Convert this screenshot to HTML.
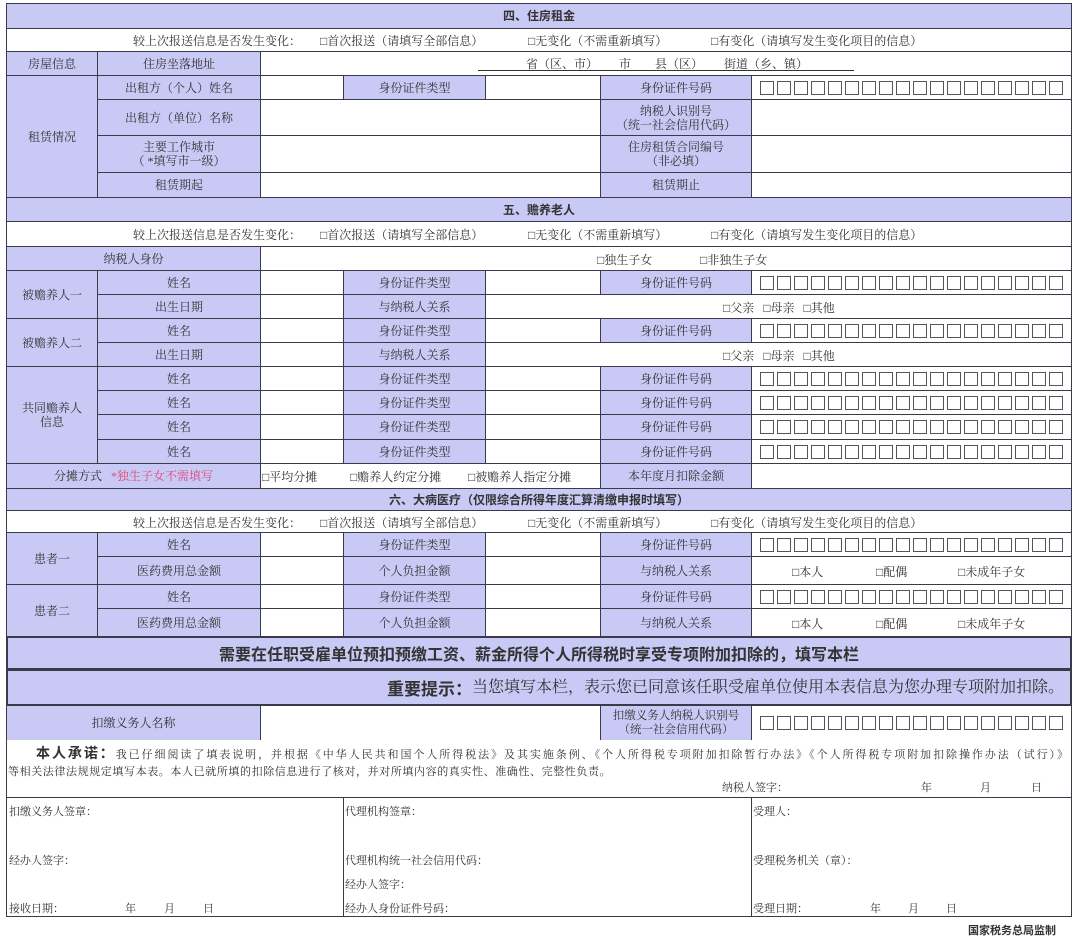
<!DOCTYPE html>
<html><head><meta charset="utf-8">
<style>
body{margin:0;width:1080px;height:940px;background:#fff;position:relative;overflow:hidden;font-family:"Liberation Serif","Noto Serif CJK SC","Noto Sans CJK SC",serif;color:#333;font-size:12px}
.c{position:absolute;box-sizing:border-box;border:1px solid #3a3a4a;display:flex;align-items:center;justify-content:center;text-align:center;line-height:14px;background:#fff}
.b{background:#c9c9f5}
.h{font-weight:bold;font-family:"Noto Sans CJK SC",sans-serif;font-size:12px}
.t{position:absolute;white-space:nowrap;font-size:12px}
.bx{display:flex;gap:3px;justify-content:center}
.bx i{display:block;width:14px;height:14px;box-sizing:border-box;border:1.5px solid #555}
</style></head><body>
<!-- Section 4 -->
<div class="c b h" style="left:6px;top:3px;width:1066px;height:26px">四、住房租金</div>
<div class="c" style="left:6px;top:28px;width:1066px;height:24px"></div>
<span class="t" style="left:133px;top:32px">较上次报送信息是否发生变化：</span>
<span class="t" style="left:320px;top:32px">□首次报送（请填写全部信息）</span>
<span class="t" style="left:528px;top:32px">□无变化（不需重新填写）</span>
<span class="t" style="left:711px;top:32px">□有变化（请填写发生变化项目的信息）</span>
<div class="c b" style="left:6px;top:51px;width:92px;height:25px">房屋信息</div>
<div class="c b" style="left:97px;top:51px;width:164px;height:25px">住房坐落地址</div>
<div class="c" style="left:260px;top:51px;width:812px;height:25px"></div>
<span class="t" style="left:478px;top:55px;width:376px;border-bottom:1px solid #333;height:15px">&nbsp;&nbsp;&nbsp;&nbsp;&nbsp;&nbsp;&nbsp;&nbsp;&nbsp;&nbsp;&nbsp;&nbsp;&nbsp;&nbsp;&nbsp;&nbsp;省（区、市）&nbsp;&nbsp;&nbsp;&nbsp;&nbsp;&nbsp;&nbsp;市&nbsp;&nbsp;&nbsp;&nbsp;&nbsp;&nbsp;&nbsp;&nbsp;县（区）&nbsp;&nbsp;&nbsp;&nbsp;&nbsp;&nbsp;&nbsp;街道（乡、镇）</span>
<div class="c b" style="left:6px;top:75px;width:92px;height:123px">租赁情况</div>
<div class="c b" style="left:97px;top:75px;width:164px;height:25px">出租方（个人）姓名</div>
<div class="c" style="left:260px;top:75px;width:84px;height:25px"></div>
<div class="c b" style="left:343px;top:75px;width:143px;height:25px">身份证件类型</div>
<div class="c" style="left:485px;top:75px;width:116px;height:25px"></div>
<div class="c b" style="left:600px;top:75px;width:152px;height:25px">身份证件号码</div>
<div class="c bx" style="left:751px;top:75px;width:321px;height:25px"><i></i><i></i><i></i><i></i><i></i><i></i><i></i><i></i><i></i><i></i><i></i><i></i><i></i><i></i><i></i><i></i><i></i><i></i></div>
<div class="c b" style="left:97px;top:99px;width:164px;height:37px">出租方（单位）名称</div>
<div class="c" style="left:260px;top:99px;width:341px;height:37px"></div>
<div class="c b" style="left:600px;top:99px;width:152px;height:37px">纳税人识别号<br>（统一社会信用代码）</div>
<div class="c" style="left:751px;top:99px;width:321px;height:37px"></div>
<div class="c b" style="left:97px;top:135px;width:164px;height:38px">主要工作城市<br>（ *填写市一级）</div>
<div class="c" style="left:260px;top:135px;width:341px;height:38px"></div>
<div class="c b" style="left:600px;top:135px;width:152px;height:38px">住房租赁合同编号<br>（非必填）</div>
<div class="c" style="left:751px;top:135px;width:321px;height:38px"></div>
<div class="c b" style="left:97px;top:172px;width:164px;height:26px">租赁期起</div>
<div class="c" style="left:260px;top:172px;width:341px;height:26px"></div>
<div class="c b" style="left:600px;top:172px;width:152px;height:26px">租赁期止</div>
<div class="c" style="left:751px;top:172px;width:321px;height:26px"></div>
<!-- Section 5 -->
<div class="c b h" style="left:6px;top:197px;width:1066px;height:25px">五、赡养老人</div>
<div class="c" style="left:6px;top:221px;width:1066px;height:26px"></div>
<span class="t" style="left:133px;top:226px">较上次报送信息是否发生变化：</span>
<span class="t" style="left:320px;top:226px">□首次报送（请填写全部信息）</span>
<span class="t" style="left:528px;top:226px">□无变化（不需重新填写）</span>
<span class="t" style="left:711px;top:226px">□有变化（请填写发生变化项目的信息）</span>
<div class="c b" style="left:6px;top:246px;width:255px;height:25px">纳税人身份</div>
<div class="c" style="left:260px;top:246px;width:812px;height:25px"></div>
<span class="t" style="left:597px;top:251px">□独生子女</span>
<span class="t" style="left:700px;top:251px">□非独生子女</span>

<div class="c b" style="left:6px;top:270px;width:92px;height:49px">被赡养人一</div>
<div class="c b" style="left:97px;top:270px;width:164px;height:25px">姓名</div>
<div class="c" style="left:260px;top:270px;width:84px;height:25px"></div>
<div class="c b" style="left:343px;top:270px;width:143px;height:25px">身份证件类型</div>
<div class="c" style="left:485px;top:270px;width:116px;height:25px"></div>
<div class="c b" style="left:600px;top:270px;width:152px;height:25px">身份证件号码</div>
<div class="c bx" style="left:751px;top:270px;width:321px;height:25px"><i></i><i></i><i></i><i></i><i></i><i></i><i></i><i></i><i></i><i></i><i></i><i></i><i></i><i></i><i></i><i></i><i></i><i></i></div>
<div class="c b" style="left:97px;top:294px;width:164px;height:25px">出生日期</div>
<div class="c" style="left:260px;top:294px;width:84px;height:25px"></div>
<div class="c b" style="left:343px;top:294px;width:143px;height:25px">与纳税人关系</div>
<div class="c" style="left:485px;top:294px;width:587px;height:25px"></div>
<span class="t" style="left:723px;top:299px">□父亲&nbsp;&nbsp;&nbsp;□母亲&nbsp;&nbsp;&nbsp;□其他</span>

<div class="c b" style="left:6px;top:318px;width:92px;height:49px">被赡养人二</div>
<div class="c b" style="left:97px;top:318px;width:164px;height:25px">姓名</div>
<div class="c" style="left:260px;top:318px;width:84px;height:25px"></div>
<div class="c b" style="left:343px;top:318px;width:143px;height:25px">身份证件类型</div>
<div class="c" style="left:485px;top:318px;width:116px;height:25px"></div>
<div class="c b" style="left:600px;top:318px;width:152px;height:25px">身份证件号码</div>
<div class="c bx" style="left:751px;top:318px;width:321px;height:25px"><i></i><i></i><i></i><i></i><i></i><i></i><i></i><i></i><i></i><i></i><i></i><i></i><i></i><i></i><i></i><i></i><i></i><i></i></div>
<div class="c b" style="left:97px;top:342px;width:164px;height:25px">出生日期</div>
<div class="c" style="left:260px;top:342px;width:84px;height:25px"></div>
<div class="c b" style="left:343px;top:342px;width:143px;height:25px">与纳税人关系</div>
<div class="c" style="left:485px;top:342px;width:587px;height:25px"></div>
<span class="t" style="left:723px;top:347px">□父亲&nbsp;&nbsp;&nbsp;□母亲&nbsp;&nbsp;&nbsp;□其他</span>

<div class="c b" style="left:6px;top:366px;width:92px;height:98px">共同赡养人<br>信息</div>
<div class="c b" style="left:97px;top:366px;width:164px;height:25px">姓名</div>
<div class="c" style="left:260px;top:366px;width:84px;height:25px"></div>
<div class="c b" style="left:343px;top:366px;width:143px;height:25px">身份证件类型</div>
<div class="c" style="left:485px;top:366px;width:116px;height:25px"></div>
<div class="c b" style="left:600px;top:366px;width:152px;height:25px">身份证件号码</div>
<div class="c bx" style="left:751px;top:366px;width:321px;height:25px"><i></i><i></i><i></i><i></i><i></i><i></i><i></i><i></i><i></i><i></i><i></i><i></i><i></i><i></i><i></i><i></i><i></i><i></i></div>
<div class="c b" style="left:97px;top:390px;width:164px;height:25px">姓名</div>
<div class="c" style="left:260px;top:390px;width:84px;height:25px"></div>
<div class="c b" style="left:343px;top:390px;width:143px;height:25px">身份证件类型</div>
<div class="c" style="left:485px;top:390px;width:116px;height:25px"></div>
<div class="c b" style="left:600px;top:390px;width:152px;height:25px">身份证件号码</div>
<div class="c bx" style="left:751px;top:390px;width:321px;height:25px"><i></i><i></i><i></i><i></i><i></i><i></i><i></i><i></i><i></i><i></i><i></i><i></i><i></i><i></i><i></i><i></i><i></i><i></i></div>
<div class="c b" style="left:97px;top:414px;width:164px;height:26px">姓名</div>
<div class="c" style="left:260px;top:414px;width:84px;height:26px"></div>
<div class="c b" style="left:343px;top:414px;width:143px;height:26px">身份证件类型</div>
<div class="c" style="left:485px;top:414px;width:116px;height:26px"></div>
<div class="c b" style="left:600px;top:414px;width:152px;height:26px">身份证件号码</div>
<div class="c bx" style="left:751px;top:414px;width:321px;height:26px"><i></i><i></i><i></i><i></i><i></i><i></i><i></i><i></i><i></i><i></i><i></i><i></i><i></i><i></i><i></i><i></i><i></i><i></i></div>
<div class="c b" style="left:97px;top:439px;width:164px;height:25px">姓名</div>
<div class="c" style="left:260px;top:439px;width:84px;height:25px"></div>
<div class="c b" style="left:343px;top:439px;width:143px;height:25px">身份证件类型</div>
<div class="c" style="left:485px;top:439px;width:116px;height:25px"></div>
<div class="c b" style="left:600px;top:439px;width:152px;height:25px">身份证件号码</div>
<div class="c bx" style="left:751px;top:439px;width:321px;height:25px"><i></i><i></i><i></i><i></i><i></i><i></i><i></i><i></i><i></i><i></i><i></i><i></i><i></i><i></i><i></i><i></i><i></i><i></i></div>

<div class="c b" style="left:6px;top:463px;width:255px;height:26px">分摊方式&nbsp;&nbsp;&nbsp;<span style="color:#e0457a">*独生子女不需填写</span></div>
<div class="c" style="left:260px;top:463px;width:341px;height:26px"></div>
<span class="t" style="left:262px;top:468px">□平均分摊</span>
<span class="t" style="left:350px;top:468px">□赡养人约定分摊</span>
<span class="t" style="left:468px;top:468px">□被赡养人指定分摊</span>
<div class="c b" style="left:600px;top:463px;width:152px;height:26px">本年度月扣除金额</div>
<div class="c" style="left:751px;top:463px;width:321px;height:26px"></div>
<!-- Section 6 -->
<div class="c b h" style="left:6px;top:488px;width:1066px;height:23px">六、大病医疗（仅限综合所得年度汇算清缴申报时填写）</div>
<div class="c" style="left:6px;top:510px;width:1066px;height:23px"></div>
<span class="t" style="left:133px;top:514px">较上次报送信息是否发生变化：</span>
<span class="t" style="left:320px;top:514px">□首次报送（请填写全部信息）</span>
<span class="t" style="left:528px;top:514px">□无变化（不需重新填写）</span>
<span class="t" style="left:711px;top:514px">□有变化（请填写发生变化项目的信息）</span>

<div class="c b" style="left:6px;top:532px;width:92px;height:53px">患者一</div>
<div class="c b" style="left:97px;top:532px;width:164px;height:25px">姓名</div>
<div class="c" style="left:260px;top:532px;width:84px;height:25px"></div>
<div class="c b" style="left:343px;top:532px;width:143px;height:25px">身份证件类型</div>
<div class="c" style="left:485px;top:532px;width:116px;height:25px"></div>
<div class="c b" style="left:600px;top:532px;width:152px;height:25px">身份证件号码</div>
<div class="c bx" style="left:751px;top:532px;width:321px;height:25px"><i></i><i></i><i></i><i></i><i></i><i></i><i></i><i></i><i></i><i></i><i></i><i></i><i></i><i></i><i></i><i></i><i></i><i></i></div>
<div class="c b" style="left:97px;top:556px;width:164px;height:29px">医药费用总金额</div>
<div class="c" style="left:260px;top:556px;width:84px;height:29px"></div>
<div class="c b" style="left:343px;top:556px;width:143px;height:29px">个人负担金额</div>
<div class="c" style="left:485px;top:556px;width:116px;height:29px"></div>
<div class="c b" style="left:600px;top:556px;width:152px;height:29px">与纳税人关系</div>
<div class="c" style="left:751px;top:556px;width:321px;height:29px"></div>
<span class="t" style="left:792px;top:563px">□本人</span><span class="t" style="left:876px;top:563px">□配偶</span><span class="t" style="left:958px;top:563px">□未成年子女</span>

<div class="c b" style="left:6px;top:584px;width:92px;height:53px">患者二</div>
<div class="c b" style="left:97px;top:584px;width:164px;height:25px">姓名</div>
<div class="c" style="left:260px;top:584px;width:84px;height:25px"></div>
<div class="c b" style="left:343px;top:584px;width:143px;height:25px">身份证件类型</div>
<div class="c" style="left:485px;top:584px;width:116px;height:25px"></div>
<div class="c b" style="left:600px;top:584px;width:152px;height:25px">身份证件号码</div>
<div class="c bx" style="left:751px;top:584px;width:321px;height:25px"><i></i><i></i><i></i><i></i><i></i><i></i><i></i><i></i><i></i><i></i><i></i><i></i><i></i><i></i><i></i><i></i><i></i><i></i></div>
<div class="c b" style="left:97px;top:608px;width:164px;height:29px">医药费用总金额</div>
<div class="c" style="left:260px;top:608px;width:84px;height:29px"></div>
<div class="c b" style="left:343px;top:608px;width:143px;height:29px">个人负担金额</div>
<div class="c" style="left:485px;top:608px;width:116px;height:29px"></div>
<div class="c b" style="left:600px;top:608px;width:152px;height:29px">与纳税人关系</div>
<div class="c" style="left:751px;top:608px;width:321px;height:29px"></div>
<span class="t" style="left:792px;top:615px">□本人</span><span class="t" style="left:876px;top:615px">□配偶</span><span class="t" style="left:958px;top:615px">□未成年子女</span>
<!-- banners -->
<div class="c b" style="left:6px;top:636px;width:1066px;height:34px;font-size:16px;font-weight:bold;font-family:'Noto Sans CJK SC',sans-serif;border-width:2px">需要在任职受雇单位预扣预缴工资、薪金所得个人所得税时享受专项附加扣除的，填写本栏</div>
<div class="c b" style="left:6px;top:669px;width:1066px;height:37px;font-size:16px;justify-content:flex-end;padding-right:6px;border-width:2px"><b style="font-family:'Noto Sans CJK SC',sans-serif;font-size:17px">重要提示：</b>当您填写本栏，表示您已同意该任职受雇单位使用本表信息为您办理专项附加扣除。</div>
<div class="c b" style="left:6px;top:705px;width:255px;height:36px">扣缴义务人名称</div>
<div class="c" style="left:260px;top:705px;width:341px;height:36px"></div>
<div class="c b" style="left:600px;top:705px;width:152px;height:36px;font-size:11.5px">扣缴义务人纳税人识别号<br>（统一社会信用代码）</div>
<div class="c bx" style="left:751px;top:705px;width:321px;height:36px"><i></i><i></i><i></i><i></i><i></i><i></i><i></i><i></i><i></i><i></i><i></i><i></i><i></i><i></i><i></i><i></i><i></i><i></i></div>
<!-- promise -->
<div class="c" style="left:6px;top:740px;width:1066px;height:58px;border-top:none;border-bottom:none"></div>
<div class="t" style="left:8px;top:744px;width:1060px;white-space:nowrap;font-size:11px;line-height:18px;text-align:justify;text-align-last:justify"><b style="font-size:14px;font-family:'Noto Sans CJK SC',sans-serif;margin-left:28px">本人承诺：</b>我已仔细阅读了填表说明，并根据《中华人民共和国个人所得税法》及其实施条例、《个人所得税专项附加扣除暂行办法》《个人所得税专项附加扣除操作办法（试行）》</div>
<div class="t" style="left:8px;top:763px;font-size:11px;line-height:18px;letter-spacing:0.6px">等相关法律法规规定填写本表。本人已就所填的扣除信息进行了核对，并对所填内容的真实性、准确性、完整性负责。</div>
<span class="t" style="left:722px;top:779px;font-size:11px">纳税人签字：</span>
<span class="t" style="left:921px;top:779px;font-size:11px">年</span><span class="t" style="left:980px;top:779px;font-size:11px">月</span><span class="t" style="left:1031px;top:779px;font-size:11px">日</span>
<!-- bottom -->
<div class="c" style="left:6px;top:797px;width:338px;height:120px;border-width:1.5px"></div>
<div class="c" style="left:343px;top:797px;width:409px;height:120px;border-width:1.5px"></div>
<div class="c" style="left:751px;top:797px;width:321px;height:120px;border-width:1.5px"></div>
<span class="t" style="left:9px;top:803px;font-size:11px">扣缴义务人签章：</span>
<span class="t" style="left:9px;top:852px;font-size:11px">经办人签字：</span>
<span class="t" style="left:9px;top:900px;font-size:11px">接收日期：</span>
<span class="t" style="left:125px;top:900px;font-size:11px">年</span><span class="t" style="left:164px;top:900px;font-size:11px">月</span><span class="t" style="left:203px;top:900px;font-size:11px">日</span>
<span class="t" style="left:345px;top:803px;font-size:11px">代理机构签章：</span>
<span class="t" style="left:345px;top:852px;font-size:11px">代理机构统一社会信用代码：</span>
<span class="t" style="left:345px;top:876px;font-size:11px">经办人签字：</span>
<span class="t" style="left:345px;top:900px;font-size:11px">经办人身份证件号码：</span>
<span class="t" style="left:753px;top:803px;font-size:11px">受理人：</span>
<span class="t" style="left:753px;top:852px;font-size:11px">受理税务机关（章）：</span>
<span class="t" style="left:753px;top:900px;font-size:11px">受理日期：</span>
<span class="t" style="left:870px;top:900px;font-size:11px">年</span><span class="t" style="left:908px;top:900px;font-size:11px">月</span><span class="t" style="left:946px;top:900px;font-size:11px">日</span>
<span class="t" style="left:968px;top:922px;font-size:11px;font-weight:bold;font-family:'Noto Sans CJK SC',sans-serif">国家税务总局监制</span>
</body></html>
